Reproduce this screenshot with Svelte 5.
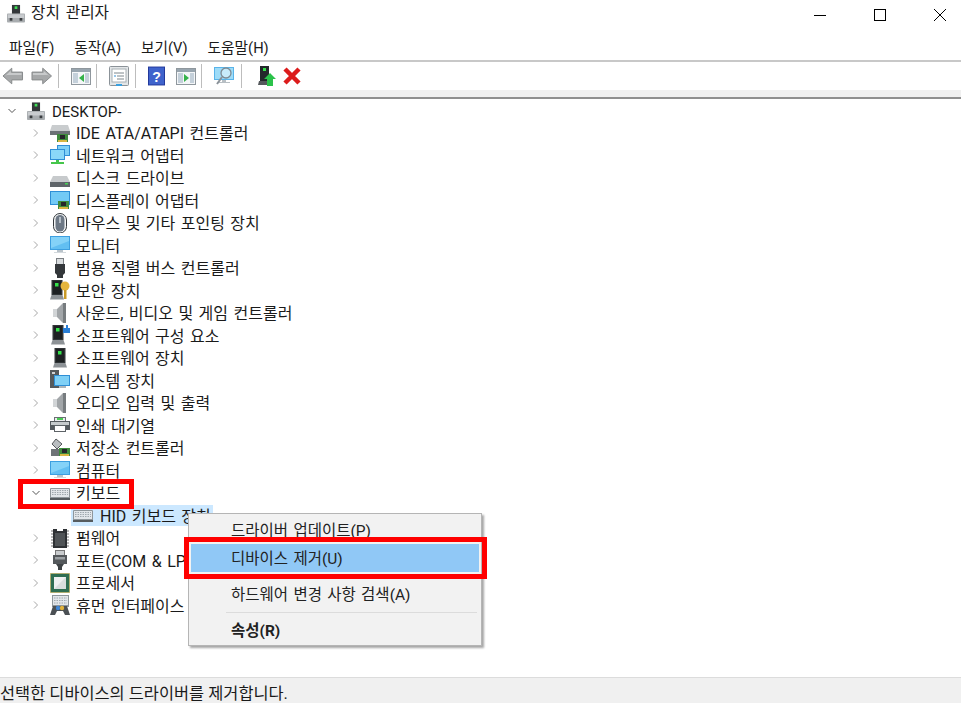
<script>
  const menus = ['파일(F)', '동작(A)', '보기(V)', '도움말(H)'];

  const rows = [
    { icon: 'ide', label: 'IDE ATA/ATAPI 컨트롤러' },
    { icon: 'net', label: '네트워크 어댑터' },
    { icon: 'disk', label: '디스크 드라이브' },
    { icon: 'display', label: '디스플레이 어댑터' },
    { icon: 'mouse', label: '마우스 및 기타 포인팅 장치' },
    { icon: 'monitor', label: '모니터' },
    { icon: 'usb', label: '범용 직렬 버스 컨트롤러' },
    { icon: 'security', label: '보안 장치' },
    { icon: 'sound', label: '사운드, 비디오 및 게임 컨트롤러' },
    { icon: 'swcomp', label: '소프트웨어 구성 요소' },
    { icon: 'tower', label: '소프트웨어 장치' },
    { icon: 'system', label: '시스템 장치' },
    { icon: 'sound', label: '오디오 입력 및 출력' },
    { icon: 'printer', label: '인쇄 대기열' },
    { icon: 'storage', label: '저장소 컨트롤러' },
    { icon: 'monitor', label: '컴퓨터' },
    { icon: 'keyboard', label: '키보드', open: true },
    { icon: 'keyboard', label: 'HID 키보드 장치', child: true },
    { icon: 'chip', label: '펌웨어' },
    { icon: 'port', label: '포트(COM & LPT)' },
    { icon: 'cpu', label: '프로세서' },
    { icon: 'hid', label: '휴먼 인터페이스 장치' }
  ];
</script>

{#snippet device()}
  <rect x="5.500" y="0.500" width="9" height="10" fill="#33373a" />
  <rect x="8.500" y="2" width="3" height="3" fill="#3ee056" />
  <rect x="0" y="10" width="20" height="10" rx="1" fill="#a9adb0" />
  <rect x="1" y="11" width="18" height="4" fill="#c9cccf" />
  <rect x="3" y="15" width="3" height="3" fill="#3a3d40" />
  <rect x="14" y="15" width="3" height="3" fill="#3a3d40" />
{/snippet}

{#snippet tower(x = 0)}
  <rect x={x + 4.500} y="0" width="11" height="15" fill="#303437" />
  <rect x={x + 6} y="1" width="8" height="13" fill="#1d2022" />
  <rect x={x + 8} y="3" width="3.500" height="3.500" fill="#35e04a" />
  <path d="M{x + 4.500} 15h11l1.500 4.500h-14z" fill="#8d9296" />
{/snippet}

{#snippet monitor()}
  <rect x="0" y="1" width="20" height="14" fill="#3d9fe0" />
  <rect x="1" y="2" width="18" height="12" fill="#62bff2" />
  <path d="M1 2h18v4L1 13z" fill="#84d2f8" />
  <rect x="7" y="15" width="6" height="2" fill="#b9c3ca" />
  <rect x="4" y="17" width="12" height="1" fill="#d3d9dd" />
{/snippet}

{#snippet board(x, y)}
  <rect {x} {y} width="11" height="8" fill="#3e8a3c" />
  <rect x={x + 3} y={y + 1} width="5" height="4" fill="#26282b" />
  <rect x={x + 1} y={y + 6} width="9" height="2" fill="#d8b642" />
{/snippet}

{#snippet keys()}
  <rect x="0" y="5" width="20" height="12" rx="1" fill="#8f979c" />
  <rect x="1" y="6" width="18" height="8" fill="#e2e6ea" />
  <path d="M2 7.500h16M2 9.500h16M2 11.500h16" stroke="#a0a8ae" stroke-dasharray="1.500 1" />
  <rect x="0" y="15" width="20" height="2" fill="#565c60" />
{/snippet}

{#snippet speaker()}
  <path d="M3 6h4l6-6h3v20h-3l-6-6H3z" fill="#a2a6a9" />
  <path d="M13 0h3v20h-3z" fill="#777c7f" />
  <path d="M3 6h4v8H3z" fill="#d2d5d7" />
{/snippet}

{#snippet icon(name)}
  <svg class="icon" viewBox="0 0 20 20" aria-hidden="true">
    {#if name === 'ide'}
      <path d="M2 2h16l2 6H0z" fill="#c9ccce" />
      <rect x="0" y="8" width="20" height="4" fill="#6c7276" />
      {@render board(7, 11)}
    {:else if name === 'net'}
      <rect x="7" y="0" width="13" height="11" fill="#2f8fd6" />
      <rect x="8" y="1" width="11" height="9" fill="#7fd0f6" />
      <rect x="0" y="4" width="15" height="11" fill="#2f8fd6" />
      <rect x="1" y="5" width="13" height="9" fill="#8ad8f8" />
      <path d="M6 15h3v2h5v2H1v-2h5z" fill="#45c64b" />
    {:else if name === 'disk'}
      <path d="M3 8h14l3 6H0z" fill="#c7cacc" />
      <rect x="0" y="14" width="20" height="5" fill="#5f6569" />
      <rect x="15" y="15" width="3" height="1.500" fill="#47d455" />
    {:else if name === 'display'}
      <rect x="0" y="1" width="20" height="14" fill="#2f8fd6" />
      <rect x="1" y="2" width="18" height="12" fill="#73caf5" />
      {@render board(8, 11)}
    {:else if name === 'mouse'}
      <rect x="3.500" y="0.500" width="13" height="19.500" rx="6.500" fill="#f3f4f5" stroke="#33383c" />
      <rect x="5.500" y="2" width="9" height="16.500" rx="4.500" fill="#6d7885" />
      <rect x="9" y="4" width="2" height="6" fill="#b5bdc5" />
    {:else if name === 'monitor'}
      {@render monitor()}
    {:else if name === 'usb'}
      <rect x="6.500" y="0.500" width="7" height="6" fill="#d9dcde" stroke="#7a7f83" />
      <path d="M5 6h10v9l-2 2v3H7v-3l-2-2z" fill="#33373a" />
    {:else if name === 'security'}
      {@render tower(-3)}
      <circle cx="15" cy="6" r="4.500" fill="#e5b53c" />
      <rect x="14" y="10" width="2.500" height="9" fill="#c99a28" />
    {:else if name === 'sound'}
      {@render speaker()}
    {:else if name === 'swcomp'}
      {@render tower(-2)}
      <path d="M13 3h3V0h2v3h2v5h-7z" fill="#2b7fd6" />
    {:else if name === 'tower'}
      {@render tower()}
    {:else if name === 'system'}
      <rect x="0" y="0" width="9" height="18" fill="#55595c" />
      <rect x="2" y="2" width="3" height="2" fill="#cfd2d4" />
      <rect x="4" y="5" width="16" height="11" fill="#2f8fd6" />
      <rect x="5" y="6" width="14" height="9" fill="#7fd0f6" />
      <rect x="9" y="16" width="7" height="2" fill="#aeb6bb" />
    {:else if name === 'printer'}
      <rect x="4.500" y="2.500" width="11" height="4" fill="#e9ebec" stroke="#6b7073" />
      <rect x="0" y="6" width="20" height="9" fill="#555a5e" />
      <rect x="1" y="7" width="18" height="3" fill="#c6cacc" />
      <rect x="7" y="3" width="6" height="2" fill="#4bcb55" />
      <rect x="4.500" y="10.500" width="11" height="6" fill="#fff" stroke="#5d6266" />
    {:else if name === 'storage'}
      <path d="M6 1l6 5-5 5-5-5z" fill="#b9bdc0" stroke="#56595c" />
      <rect x="1" y="11" width="9" height="7" fill="#6e7377" />
      {@render board(9, 10)}
    {:else if name === 'keyboard'}
      {@render keys()}
    {:else if name === 'chip'}
      <path d="M1 3h2M1 6h2M1 9h2M1 12h2M1 15h2M1 18h2M17 3h2M17 6h2M17 9h2M17 12h2M17 15h2M17 18h2" stroke="#777" />
      <path d="M3 1h4v2h6V1h4v19H3z" fill="#2f3235" />
      <rect x="5" y="5" width="10" height="13" fill="#505457" />
    {:else if name === 'port'}
      <rect x="5.500" y="0.500" width="9" height="5" fill="#c9ccce" stroke="#777" />
      <rect x="3" y="5" width="14" height="9" fill="#54585b" />
      <rect x="5" y="7" width="10" height="2.500" fill="#9ba0a3" />
      <path d="M6 14h8l-2 3v3H8v-3z" fill="#3e4245" />
    {:else if name === 'cpu'}
      <rect x="0.500" y="0.500" width="19" height="19" fill="#2f6e52" stroke="#c9a53c" stroke-dasharray="1 1" />
      <rect x="4" y="4" width="12" height="12" fill="#d9dddd" />
      <path d="M4 16V4h12z" fill="#eef0f0" />
    {:else if name === 'hid'}
      <rect x="2" y="0" width="17" height="12" fill="#8f979c" />
      <rect x="3" y="1" width="15" height="9" fill="#e2e6ea" />
      <path d="M4 3h13M4 5.500h13M4 8h13" stroke="#a0a8ae" stroke-dasharray="1.500 1" />
      <path d="M3 11h14l3 9h-5l-2-4H7l-2 4H0z" fill="#4b5054" />
      <circle cx="8" cy="13" r="2.200" fill="#3f86d6" />
      <circle cx="12" cy="13" r="2.200" fill="#e0b23c" />
    {/if}
  </svg>
{/snippet}

{#snippet windowPane(kind)}
  <svg class="tool" viewBox="0 0 20 20" aria-hidden="true">
    <rect x="0.500" y="2.500" width="19" height="16" fill="#f4f6f8" stroke="#8f979d" />
    <rect x="1" y="3" width="18" height="3" fill="#98a5af" />
    <rect x="2" y="7" width="5" height="10" fill="#c4d0da" />
    <rect x="14" y="7" width="4" height="10" fill="#c4d0da" />
    {#if kind === 'left'}
      <path d="M13 8v8l-5-4z" fill="#35b24a" />
    {:else}
      <path d="M8 8v8l5-4z" fill="#35b24a" />
    {/if}
  </svg>
{/snippet}

{#snippet arrow(flip)}
  <svg class="tool arrow" class:flip viewBox="0 0 22 20" aria-hidden="true">
    <path d="M1 10l9-8v4h11v8H10v4z" fill="#a6a8a9" stroke="#878a8b" />
    <path d="M3 10l6-5v2h11v2H5z" fill="#c8cacb" />
  </svg>
{/snippet}

<div class="window">
  <header class="titlebar">
    <svg class="appicon" viewBox="0 0 20 20" aria-hidden="true">{@render device()}</svg>
    <span class="title">장치 관리자</span>
    <div class="controls">
      <svg viewBox="0 0 12 12" aria-hidden="true"><path d="M0 6.500h12" stroke="#000" /></svg>
      <svg viewBox="0 0 12 12" aria-hidden="true"><rect x="0.500" y="0.500" width="11" height="11" fill="none" stroke="#000" /></svg>
      <svg viewBox="0 0 12 12" aria-hidden="true"><path d="M0 0l12 12M12 0L0 12" stroke="#000" /></svg>
    </div>
  </header>

  <nav class="menubar">
    {#each menus as m}<span>{m}</span>{/each}
  </nav>

  <div class="toolbar">
    {@render arrow(false)}
    <span class="gap7"></span>
    {@render arrow(true)}
    <i class="sep"></i>
    {@render windowPane('left')}
    <i class="sep"></i>
    <svg class="tool" viewBox="0 0 20 20" aria-hidden="true">
      <rect x="0.500" y="0.500" width="19" height="19" rx="1" fill="#e3e6e8" stroke="#8b9298" />
      <rect x="3" y="3" width="14" height="13" fill="#fff" stroke="#a8afb4" />
      <path d="M5 7h10M8 10h7M8 13h7" stroke="#7d868c" />
      <path d="M5 10h2" stroke="#2f8fd6" />
      <rect x="7" y="18" width="6" height="2" fill="#39a0e0" />
    </svg>
    <i class="sep"></i>
    <svg class="tool help" viewBox="0 0 18 20" aria-hidden="true">
      <rect width="18" height="20" fill="#22389a" />
      <rect x="1" y="1" width="16" height="18" fill="#3f63cc" />
      <text x="9" y="16" text-anchor="middle" font-size="15" font-weight="700" fill="#fff" font-family="Liberation Sans">?</text>
    </svg>
    {@render windowPane('right')}
    <i class="sep"></i>
    <svg class="tool monitor-tool" viewBox="0 0 21 20" aria-hidden="true">
      <rect x="0" y="1" width="20" height="13" fill="#59b4ea" />
      <rect x="1" y="2" width="18" height="11" fill="#9edcf8" />
      <path d="M8 14h4v2H8zM4 16h12v1H4z" fill="#b8bfc4" />
      <circle cx="12" cy="7" r="5" fill="#d8f1fb" fill-opacity="0.7" stroke="#7e8b94" stroke-width="1.300" />
      <path d="M8 11l-5 7" stroke="#8a9299" stroke-width="2" />
    </svg>
    <i class="sep"></i>
    <svg class="tool update" viewBox="0 0 18 20" aria-hidden="true">
      <rect x="2" y="0" width="9" height="15" fill="#24282b" />
      <rect x="5" y="2" width="3" height="3" fill="#35e04a" />
      <path d="M1 15h11v4H0z" fill="#55595c" />
      <path d="M12 7l6 6h-3v7H9v-7H6z" fill="#2bc24a" />
    </svg>
    <svg class="tool remove" viewBox="0 0 18 18" aria-hidden="true">
      <path d="M2 2l14 14M16 2L2 16" stroke="#dc1c1c" stroke-width="4.500" />
    </svg>
  </div>
  <div class="strip"></div>

  <main class="tree">
    <div class="row root">
      <svg class="chev" viewBox="0 0 8 8" aria-hidden="true"><path d="M0.500 2l3.500 3.500L7.500 2" fill="none" stroke="#555" /></svg>
      <svg class="icon" viewBox="0 0 20 20" aria-hidden="true">{@render device()}</svg>
      <span class="host">DESKTOP-</span>
    </div>
    {#each rows as r}
      <div class="row" class:child={r.child}>
        {#if !r.child}
          {#if r.open}
            <svg class="chev" viewBox="0 0 8 8" aria-hidden="true"><path d="M0.500 2l3.500 3.500L7.500 2" fill="none" stroke="#555" /></svg>
          {:else}
            <svg class="chev" viewBox="0 0 8 8" aria-hidden="true"><path d="M2 0.500l3.500 3.500L2 7.500" fill="none" stroke="#a6a6a6" /></svg>
          {/if}
        {/if}
        <div class="entry">
          {@render icon(r.icon)}
          <span class="label">{r.label}</span>
        </div>
      </div>
    {/each}
  </main>

  <footer class="status">
    <span class="msg">선택한 디바이스의 드라이버를 제거합니다.</span>
    <i></i>
    <i></i>
  </footer>

  <div class="ctx">
    <div class="item">드라이버 업데이트(P)</div>
    <div class="item active">디바이스 제거(U)</div>
    <div class="rule"></div>
    <div class="item">하드웨어 변경 사항 검색(A)</div>
    <div class="rule"></div>
    <div class="item bold">속성(R)</div>
  </div>

  <div class="mark mark-kbd"></div>
  <div class="mark mark-item"></div>
</div>

<style>
  :global(body) {
    margin: 0;
    background: #fff;
  }

  .window {
    position: relative;
    width: 961px;
    height: 703px;
    overflow: hidden;
    display: flex;
    flex-direction: column;
    font-family: Roboto, "Noto Sans CJK KR", sans-serif;
    font-size: 16px;
    word-spacing: 1.500px;
    color: #1a1a1a;
  }

  .titlebar {
    height: 33px;
    flex: none;
    display: flex;
    align-items: center;
    padding: 0 0 10px 7px;
    box-sizing: border-box;
  }

  .appicon {
    width: 18px;
    height: 19px;
    margin-top: 3px;
  }

  .title {
    margin-left: 6px;
    font-size: 15.700px;
    word-spacing: 2px;
  }

  .controls {
    margin-left: auto;
    display: flex;
    gap: 48px;
    padding-right: 15px;
    padding-top: 6px;
  }

  .controls svg {
    width: 12px;
    height: 12px;
    display: block;
  }

  .menubar {
    height: 27px;
    flex: none;
    display: flex;
    gap: 20px;
    align-items: center;
    padding: 0 0 0 9px;
    font-size: 14.700px;
  }

  .toolbar {
    height: 28px;
    flex: none;
    border-top: 2px solid #c8c8c8;
    display: flex;
    align-items: center;
    padding-left: 2px;
  }

  .gap7 {
    width: 7px;
    flex: none;
  }

  .tool {
    width: 20px;
    height: 20px;
    flex: none;
  }

  .arrow {
    width: 21.500px;
  }

  .flip {
    transform: scaleX(-1);
  }

  .help {
    width: 17px;
    margin-right: 11px;
  }

  .monitor-tool {
    width: 21px;
  }

  .update {
    width: 18px;
    margin-left: 4px;
    margin-right: 7px;
  }

  .remove {
    width: 18px;
    height: 18px;
  }

  .sep {
    width: 1px;
    height: 24px;
    background: #bdbdbd;
    margin: 0 12px 0 5.500px;
    flex: none;
  }

  .strip {
    height: 7px;
    flex: none;
    background: #f0f0f0;
    border-bottom: 2px solid #8f8f8f;
  }

  .tree {
    flex: 1;
    min-height: 0;
    padding-top: 1px;
  }

  .row {
    height: 22.500px;
    display: flex;
    align-items: center;
    padding-left: 32px;
    box-sizing: border-box;
    white-space: nowrap;
  }

  .row.root {
    padding-left: 8px;
    height: 21.500px;
    font-size: 15px;
  }

  .host {
    padding-top: 2px;
  }

  .label {
    padding-bottom: 1px;
  }

  .root .chev {
    margin-right: 11px;
  }

  .root .icon {
    margin-right: 7px;
    width: 18px;
  }

  .chev {
    width: 8px;
    height: 8px;
    flex: none;
  }

  .entry {
    display: flex;
    align-items: center;
    height: 21px;
    margin-left: 10px;
    gap: 6px;
  }

  .icon {
    width: 20px;
    height: 20px;
    flex: none;
  }

  .child {
    padding-left: 71px;
  }

  .child .entry {
    margin-left: 0;
    padding: 0 8px 0 2px;
    background: #cce8ff;
    width: 132px;
    overflow: hidden;
    gap: 7px;
  }

  .status {
    height: 26px;
    flex: none;
    background: #f0f0f0;
    border-top: 1px solid #dcdcdc;
    display: flex;
    align-items: flex-end;
    font-size: 16.400px;
    word-spacing: 0;
    box-sizing: border-box;
  }

  .msg {
    width: 694px;
    flex: none;
    white-space: nowrap;
    line-height: 18px;
  }

  .status i {
    width: 1px;
    height: 21px;
    background: #dedede;
    margin-right: 165px;
  }

  .ctx {
    position: absolute;
    left: 188px;
    top: 513px;
    width: 294px;
    height: 133px;
    box-sizing: border-box;
    padding: 2px;
    background: #f2f2f2;
    border: 1px solid #b5b5b5;
    box-shadow: 2px 2px 2px rgba(0, 0, 0, 0.35);
    font-size: 15.500px;
    word-spacing: 1.500px;
  }

  .item {
    height: 28px;
    line-height: 30px;
    padding-left: 40px;
    white-space: nowrap;
    color: #222;
  }

  .item.active {
    background: #90c8f6;
  }

  .bold {
    font-weight: 700;
  }

  .rule {
    height: 1px;
    background: #dcdcdc;
    margin: 3.500px 2px 3.500px 35px;
  }

  .mark {
    position: absolute;
    border: 5px solid #ff0000;
    box-sizing: border-box;
    pointer-events: none;
  }

  .mark-kbd {
    left: 18px;
    top: 479px;
    width: 116px;
    height: 30px;
  }

  .mark-item {
    left: 184px;
    top: 537px;
    width: 303px;
    height: 42px;
  }
</style>
